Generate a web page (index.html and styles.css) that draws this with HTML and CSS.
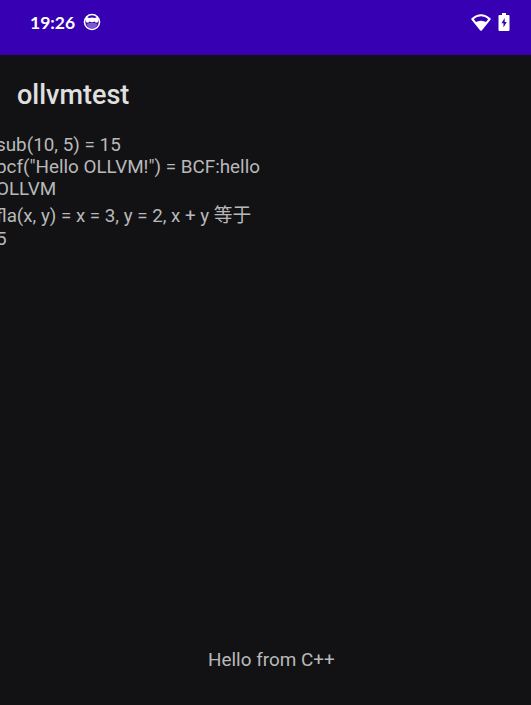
FILE: index.html
```html
<!DOCTYPE html>
<html lang="en">
<head>
<meta charset="utf-8">
<title>ollvmtest</title>
<link rel="stylesheet" href="styles.css">
</head>
<body>
<header class="status">
  <span class="time">19:26</span>
  <svg class="face" viewBox="0 0 18 18"><circle cx="9" cy="9" r="7.5" fill="none" stroke="#fff" stroke-width="1.6"/><path d="M3 9V3.500L6 5Q9 4 12 5L15 3.500V9Q12.500 10.500 11.500 8.500Q9 10 6.500 8.500Q5.500 10.500 3 9Z" fill="#fff"/><path d="M3.500 11Q9 8.500 14.500 11Q13 15.500 9 15.500Q5 15.500 3.500 11Z" fill="#fff" opacity=".35"/></svg>
  <svg class="wifi" viewBox="0 0 20 17"><path d="M1.300 5Q10-2.500 18.700 5L10 15.800Z" fill="none" stroke="#fff" stroke-width="2" stroke-linejoin="round"/><path d="M4 8.500Q10 5 16 8.500L10 16Z" fill="#fff"/></svg>
  <svg class="battery" viewBox="0 0 12 18"><path d="M4 0h4v2h2.500q1 0 1 1v14q0 1-1 1h-9q-1 0-1-1V3q0-1 1-1H4Z" fill="#fff"/><path d="M6.700 5L3.500 10.300h2v4.200l3.200-5.500h-2Z" fill="#3700b3"/></svg>
</header>
<h1 class="title">ollvmtest</h1>
<main class="output">
  <div class="line">sub(10, 5) = 15</div>
  <div class="line">bcf("Hello OLLVM!") = BCF:hello</div>
  <div class="line">OLLVM</div>
  <div class="line cjk">fla(x, y) = x = 3, y = 2, x + y 等于</div>
  <div class="line">5</div>
</main>
<footer class="hello">Hello from C++</footer>
</body>
</html>
```
FILE: styles.css
```css
* { box-sizing: border-box; }
body { margin: 0; height: 705px; overflow: hidden; display: flex; flex-direction: column; background: #121214; color: #b9b9ba; font-family: Roboto, "Noto Sans CJK SC", sans-serif; font-size: 19px; }
.status { height: 55px; flex: none; display: flex; align-items: flex-start; padding: 13px 21px 0 30px; background: #3700b3; color: #fff; }
.time { width: 45px; font: 700 17.5px/20px Lato, sans-serif; }
.face { width: 18px; height: 18px; margin-left: 8px; }
.wifi { width: 20px; height: 17px; margin: 1px 7px 0 auto; }
.battery { width: 12px; height: 18px; }
.title { margin: 23px 0 0 17px; font-size: 27px; line-height: 34px; font-weight: 500; color: #e0e0e0; }
.output { margin: 22px 0 0 -4px; white-space: nowrap; font-size: 18.85px; }
.line { height: 22px; line-height: 22px; }
.cjk { height: 28px; line-height: 32px; font-size: 18.75px; }
.hello { margin: auto 0 34px 208px; line-height: 22px; font-size: 18.9px; }
```
